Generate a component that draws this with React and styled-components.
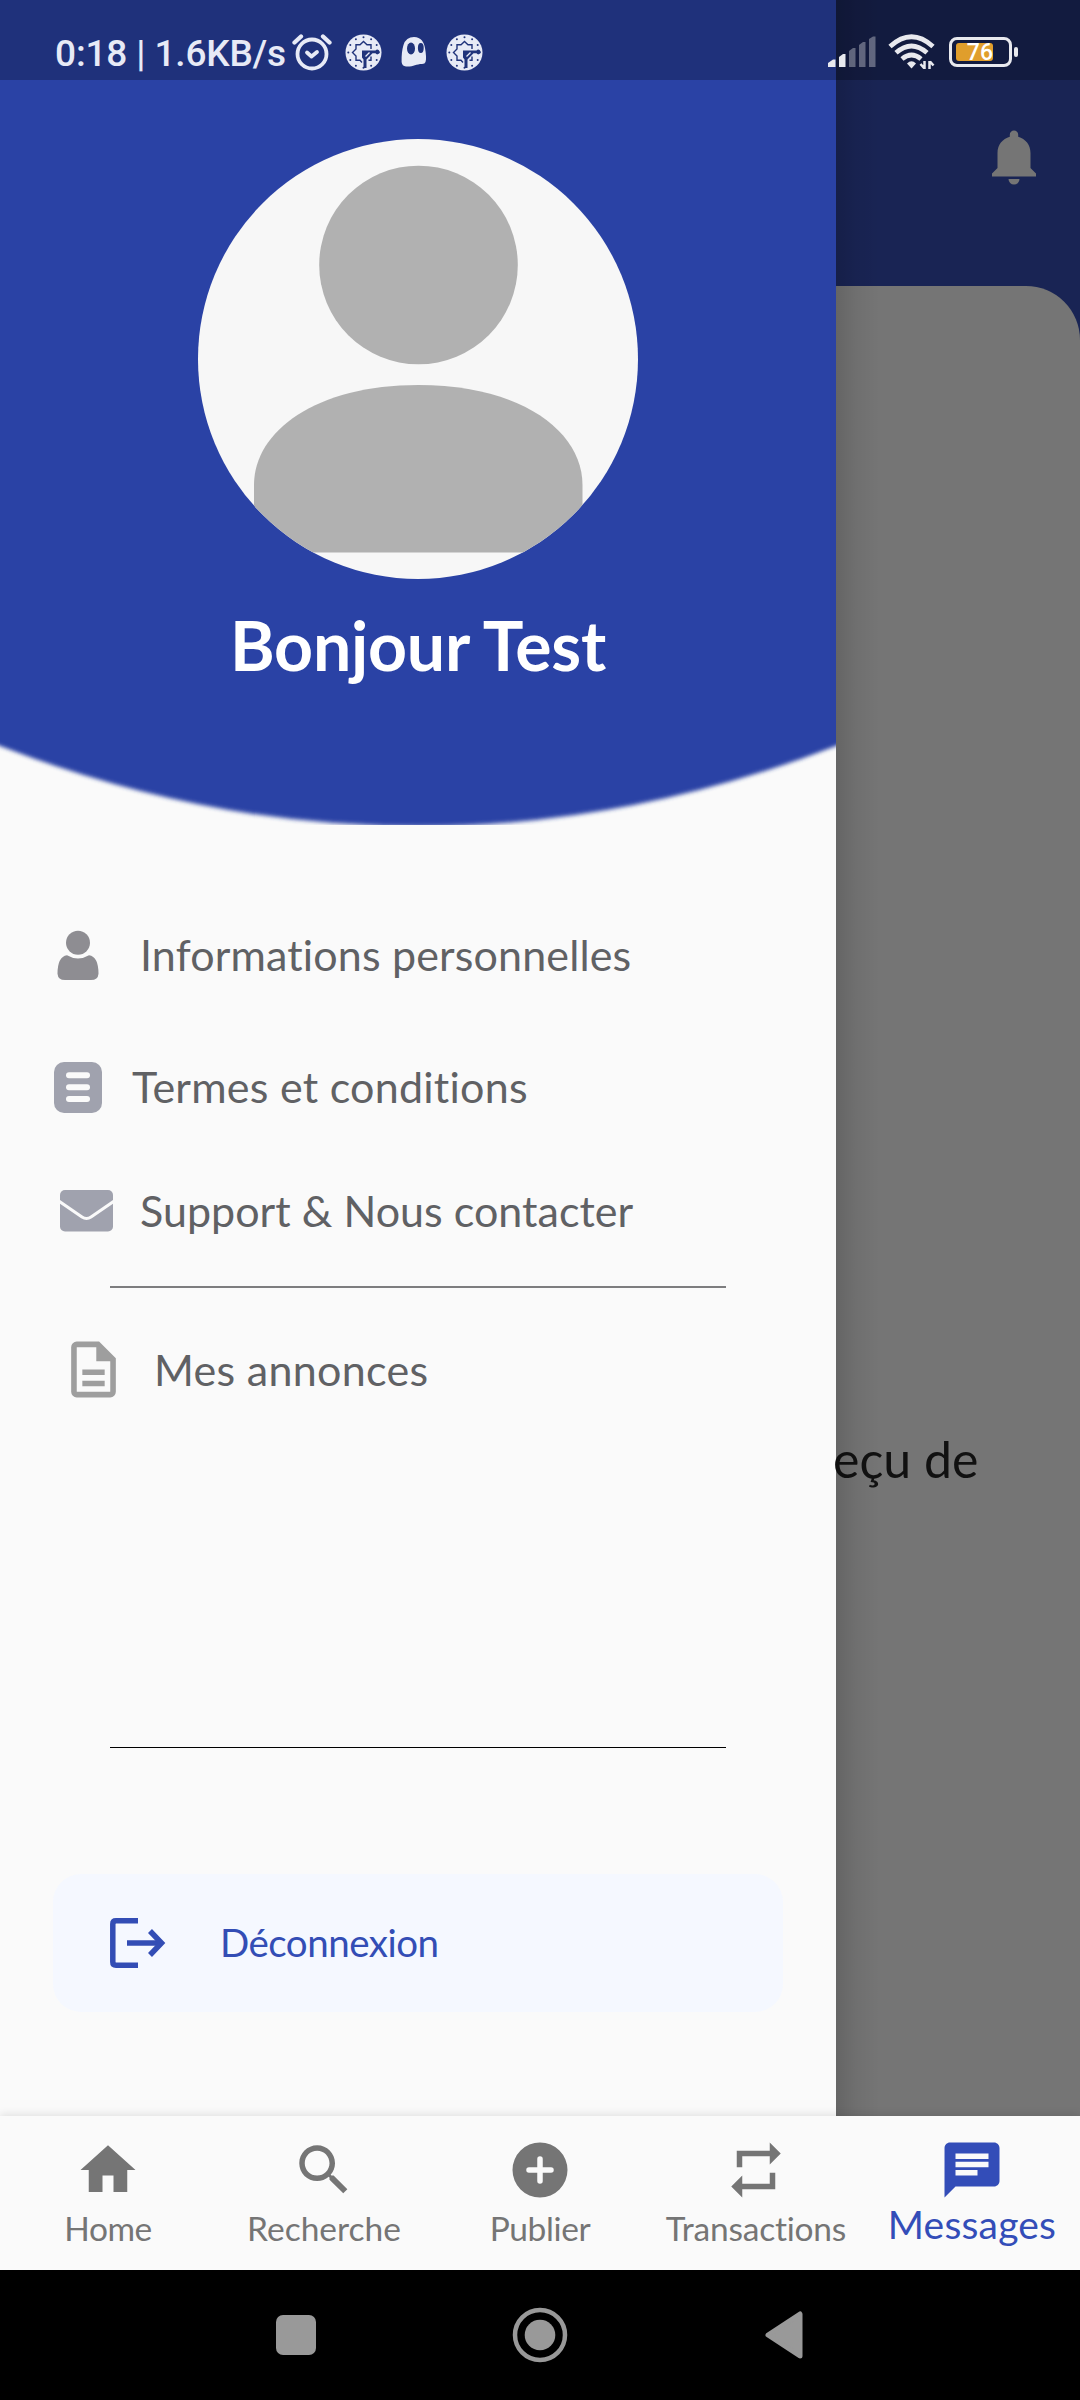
import React from "react";
import styled, { createGlobalStyle } from "styled-components";

const GlobalStyle = createGlobalStyle`
  * { box-sizing: border-box; }
  body { margin: 0; background: #000; }
  svg { display: block; flex: none; }
`;

const Screen = styled.div`
  position: relative;
  width: 1080px;
  height: 2400px;
  display: flex;
  flex-direction: column;
  overflow: hidden;
  font-family: Lato, "Liberation Sans", sans-serif;
  font-variant-ligatures: none;
`;

const Body = styled.div`
  display: flex;
  height: 2116px;
`;

const Drawer = styled.aside`
  width: 836px;
  display: flex;
  flex-direction: column;
  background: #fafafa;
`;

const DrawerHeader = styled.header`
  height: 825px;
  padding-top: 139px;
  display: grid;
  grid-template-columns: 836px;
  grid-template-rows: 440px 82px;
  row-gap: 25px;
  justify-items: center;
  position: relative;
`;

const HeaderShape = styled.svg`
  position: absolute;
  inset: 0;
`;

const Avatar = styled.div`
  position: relative;
  width: 440px;
  height: 440px;
  border-radius: 50%;
  overflow: hidden;
  background: #f7f7f7;
`;

const Greeting = styled.h1`
  position: relative;
  margin: 0;
  color: #fff;
  font-size: 68px;
  line-height: 82px;
  font-weight: 700;
  white-space: nowrap;
  letter-spacing: -0.25px;
`;

const Menu = styled.nav`
  padding-top: 64px;
  display: flex;
  flex-direction: column;
`;

const MenuRow = styled.div`
  height: ${(p) => p.$height}px;
  padding-left: ${(p) => p.$inset}px;
  margin-top: ${(p) => p.$top || 0}px;
  display: flex;
  align-items: center;
  gap: ${(p) => p.$gap}px;
`;

const MenuLabel = styled.span`
  color: #606164;
  font-size: 43px;
  line-height: 52px;
  white-space: nowrap;
  letter-spacing: ${(p) => p.$track || 0}px;
`;

const Divider = styled.div`
  width: 616px;
  height: ${(p) => p.$weight}px;
  margin: ${(p) => p.$top}px 0 0 110px;
  background: ${(p) => p.$color};
`;

const LogoutButton = styled.div`
  width: 730px;
  height: 138px;
  margin: 126px 0 0 53px;
  padding-left: 57px;
  border-radius: 28px;
  background: #f5f8ff;
  display: flex;
  align-items: center;
  gap: 54px;
`;

const LogoutLabel = styled.span`
  color: #334db5;
  font-size: 38.5px;
  line-height: 46px;
  padding-bottom: 3px;
  letter-spacing: -0.5px;
`;

const Backdrop = styled.main`
  width: 244px;
  display: flex;
  flex-direction: column;
  background: #192454;
  position: relative;
  &::after {
    content: "";
    position: absolute;
    inset: 0 auto 0 0;
    width: 44px;
    background: linear-gradient(90deg, rgba(0,0,0,0.14), rgba(0,0,0,0.05) 45%, rgba(0,0,0,0));
  }
`;

const BackdropBar = styled.div`
  height: 286px;
  padding: 130px 43px 0 0;
  display: flex;
  justify-content: flex-end;
`;

const BackdropSheet = styled.div`
  flex: 1;
  padding-top: 1143px;
  background: #757575;
  border-top-right-radius: 54px;
`;

const BackdropText = styled.p`
  margin: 0 0 0 -3px;
  color: #111;
  font-size: 50px;
  line-height: 60px;
  white-space: nowrap;
`;

const TabBar = styled.nav`
  position: relative;
  height: 154px;
  display: grid;
  grid-template-columns: repeat(5, 216px);
  background: #fafafa;
  box-shadow: 0 -2px 8px rgba(0, 0, 0, 0.1);
`;

const Tab = styled.div`
  padding-top: 21px;
  display: flex;
  flex-direction: column;
  align-items: center;
  color: ${(p) => (p.$active ? "#334db8" : "#757575")};
`;

const TabLabel = styled.span`
  margin-top: ${(p) => (p.$active ? -2 : 2)}px;
  font-size: ${(p) => (p.$active ? 39 : 33.5)}px;
  line-height: 46px;
  white-space: nowrap;
  letter-spacing: ${(p) => p.$track || 0}px;
`;

const SystemNav = styled.footer`
  height: 130px;
  display: flex;
  align-items: center;
  justify-content: center;
  background: #000;
`;

const SystemKey = styled.div`
  width: 244px;
  display: flex;
  justify-content: center;
`;

const StatusBar = styled.div`
  position: absolute;
  top: 0;
  left: 0;
  width: 1080px;
  height: 80px;
  padding: 24px 62px 0 55px;
  display: flex;
  justify-content: space-between;
  background: rgba(0, 0, 0, 0.25);
`;

const StatusGroup = styled.div`
  height: 56px;
  display: flex;
  align-items: center;
`;

const StatusIcons = styled.div`
  display: flex;
  align-items: center;
  gap: 19px;
  margin-left: 13px;
`;

const Clock = styled.span`
  width: 237px;
  padding-top: 3px;
  color: #e7eaf6;
  font: 500 37px/56px Roboto, sans-serif;
  white-space: nowrap;
  letter-spacing: -0.15px;
`;

const Battery = styled.div`
  width: 63px;
  height: 30px;
  margin-left: 13px;
  padding: 3px 4px;
  border: 3px solid #e8e9ee;
  border-radius: 8px;
`;

const BatteryLevel = styled.div`
  width: 37px;
  height: 18px;
  border-radius: 3px;
  background: #e09e2c;
  color: #fff;
  text-align: right;
  font: 500 23px/20px Roboto, sans-serif;
`;

const BatteryTip = styled.div`
  width: 4px;
  height: 10px;
  margin-left: 2px;
  border-radius: 2px;
  background: #e8e9ee;
`;

const SignalGroup = styled.div`
  display: flex;
  align-items: center;
  gap: 11px;
`;

function Glyph({ d, size = 66 }) {
  return (
    <svg width={size} height={size} viewBox="0 0 24 24" fill="currentColor">
      <path d={d} />
    </svg>
  );
}

function PersonIcon() {
  return (
    <svg width="42" height="50" viewBox="0 -0.700 42 50" fill="#8e8d92">
      <circle cx="21" cy="12" r="12" />
      <path d="M10 24.500 Q21 31 32 24.500 Q41.500 26 41.500 43 Q41 49.300 34 49.300 H8 Q1 49.300 .5 43 Q.5 26 10 24.500Z" />
    </svg>
  );
}

function ListIcon() {
  return (
    <svg width="48" height="51" viewBox="0 0 48 51">
      <rect width="48" height="51" rx="10" fill="#a0a2ae" />
      <g fill="#fafafa">
        <rect x="12" y="10.300" width="24" height="6" rx="3" />
        <rect x="12" y="22.200" width="24" height="6" rx="3" />
        <rect x="12" y="34" width="24" height="6" rx="3" />
      </g>
    </svg>
  );
}

function MailIcon() {
  return (
    <svg width="53" height="42" viewBox="0 0 53 42">
      <rect width="53" height="41.500" rx="5" fill="#a0a2ae" />
      <path d="M-2 10.500 L22 27 Q26.500 30 31 27 L55 10.500" fill="none" stroke="#fafafa" strokeWidth="3" />
    </svg>
  );
}

function LogoutIcon() {
  return (
    <svg width="56" height="50" viewBox="0 0 56 50" fill="none" stroke="#334db5" strokeWidth="5.500">
      <path d="M28 2.800 H6 Q2.800 2.800 2.800 6 V44 Q2.800 47.200 6 47.200 H28" />
      <path d="M17 25 H51" />
      <path d="M40 13 L51.500 25 L40 37" />
    </svg>
  );
}

function BellIcon() {
  return (
    <svg width="46" height="56" viewBox="0 0 46 56" fill="#757575">
      <path d="M23 .5 a4.200 4.200 0 0 1 4.200 4.200 V6.800 C34.500 8.800 39.500 15 39.500 23 V38 L45 43.500 V46.500 H1 V43.500 L6.500 38 V23 C6.500 15 11.500 8.800 18.800 6.800 V4.700 A4.200 4.200 0 0 1 23 .5Z" />
      <path d="M17.500 49 H28.500 A5.500 5.500 0 0 1 17.500 49Z" />
    </svg>
  );
}

function AlarmIcon() {
  return (
    <svg width="40" height="38" viewBox="0 0 40 38" fill="none" stroke="#e7eaf6" strokeLinecap="round">
      <circle cx="20" cy="21" r="14.500" strokeWidth="3.800" />
      <path d="M15 19.500 L19.500 23.500 L25 19" strokeWidth="3.800" strokeLinejoin="round" />
      <path d="M2.500 9.500 L9 3.500 M31 3.500 L37.500 9.500" strokeWidth="4.300" />
    </svg>
  );
}

function BadgeIcon() {
  const dots = Array.from({ length: 12 }, (_, i) => (i * Math.PI) / 6);
  return (
    <svg width="37" height="37" viewBox="-18.500 -18.500 37 37">
      <circle r="18" fill="#e7eaf6" />
      <g fill="#20337b">
        {dots.map((a) => (
          <circle key={a} cx={15.2 * Math.cos(a)} cy={15.2 * Math.sin(a)} r="1" />
        ))}
        <path d="M-1.500 -2 H12 A2.300 2.300 0 1 1 12 .8 H9 L3 7 V15.500 H0 V7 L-1.500 5Z" />
      </g>
      <path d="M2 4 L6 0" stroke="#e7eaf6" strokeWidth="1.200" />
      <path
        d="M-1.500 10 L-3.500 7.800 H-7.500 V3.500 L-11 0 L-7.500 -3.500 V-7.800 H-3.500 L0 -11 L3.500 -7.800 H7.500 V-3.500 M5 7.800 H7.500 V4"
        fill="none"
        stroke="#20337b"
        strokeWidth="1.400"
      />
    </svg>
  );
}

function GhostIcon() {
  return (
    <svg width="26" height="30" viewBox="0 0 26 30">
      <path d="M13 0 C20 0 23 5 24 11 C25 17 25.500 22 24.500 25 Q24 27 21 27 C15 27 12 30 5 29.500 Q1 29 .6 25 C.5 18 1 13 2.500 8 Q5 0 13 0Z" fill="#e7eaf6" />
      <ellipse cx="10" cy="11.500" rx="4" ry="6" fill="#20337b" />
      <ellipse cx="19.800" cy="11" rx="2.900" ry="5" fill="#20337b" />
    </svg>
  );
}

function SignalIcon() {
  return (
    <svg width="49" height="32" viewBox="0 0 49 32" fill="#e8e9ee">
      <path d="M0 31 V27 L5 23.500 H7.500 V31Z" />
      <path d="M11 31 V21 L15 18 H17.500 V31Z" />
      <g opacity="0.370">
        <path d="M21 31 V15 L25 12 H27.500 V31Z" />
        <path d="M31 31 V9 L35 6 H37.500 V31Z" />
        <path d="M41 31 V3 L45 .5 H47.500 V31Z" />
      </g>
    </svg>
  );
}

function WifiIcon() {
  return (
    <svg width="48" height="36" viewBox="0 0 48 36" fill="none" stroke="#e8e9ee" strokeWidth="4.800">
      <path d="M2 12.500 Q23.500 -7 45 12.500" />
      <path d="M8 18.800 Q23.500 5 39 18.800" />
      <path d="M14 25 Q23.500 17 33 25" />
      <path d="M19 29.500 Q23.500 25 28 29.500 L23.500 34.500Z" fill="#e8e9ee" stroke="none" />
      <path d="M36.500 27 V35 M41.500 35 V27 M32.500 30 L36 34 M42 27.500 L45.500 31.500" strokeWidth="2.500" />
    </svg>
  );
}

const tabs = [
  { label: "Home", track: -0.5, d: "M10 20v-6h4v6h5v-8h3L12 3 2 12h3v8z" },
  {
    label: "Recherche",
    track: 0,
    d: "M15.500 14h-.79l-.28-.27C15.410 12.590 16 11.110 16 9.500 16 5.910 13.090 3 9.500 3S3 5.910 3 9.500 5.910 16 9.500 16c1.610 0 3.090-.59 4.230-1.570l.27.28v.79l5 4.990L20.490 19l-4.990-5zm-6 0C7.010 14 5 11.990 5 9.500S7.010 5 9.500 5 14 7.010 14 9.500 11.990 14 9.500 14z",
  },
  {
    label: "Publier",
    track: -0.4,
    d: "M12 2a10 10 0 1 0 0 20 10 10 0 0 0 0-20zM16 13h-3v3a1 1 0 0 1-2 0v-3H8a1 1 0 0 1 0-2h3V8a1 1 0 0 1 2 0v3h3a1 1 0 0 1 0 2z",
  },
  {
    label: "Transactions",
    track: -0.2,
    d: "M7 7h10v3l4-4-4-4v3H5v6h2V7zm10 10H7v-3l-4 4 4 4v-3h12v-6h-2v4z",
  },
  {
    label: "Messages",
    track: 0.2,
    active: true,
    d: "M20 2H4c-1.100 0-1.990.9-1.990 2L2 22l4-4h14c1.100 0 2-.9 2-2V4c0-1.100-.9-2-2-2zM6 9h12v2H6V9zm8 5H6v-2h8v2zm4-6H6V6h12v2z",
  },
];

export default function App() {
  return (
    <>
      <GlobalStyle />
      <Screen>
        <Body>
          <Drawer>
            <DrawerHeader>
              <HeaderShape width="836" height="825" viewBox="0 0 836 825">
                <defs>
                  <filter id="soft" x="-5%" y="-5%" width="110%" height="110%">
                    <feGaussianBlur stdDeviation="0 2" />
                  </filter>
                </defs>
                <path d="M-10 -20 H846 V742 Q836 746 836 746 Q418 907 0 746 L-10 742Z" fill="#2b43a5" filter="url(#soft)" />
              </HeaderShape>
              <Avatar>
                <svg width="440" height="440" viewBox="0 0 440 440" fill="#b1b1b1">
                  <circle cx="220.500" cy="126" r="99.300" />
                  <path d="M56 346 C56 292 118 246 220.500 246 C323 246 384.500 292 384.500 346 V413.500 H56Z" />
                </svg>
              </Avatar>
              <Greeting>Bonjour Test</Greeting>
            </DrawerHeader>
            <Menu>
              <MenuRow $height={132} $inset={57} $gap={41}>
                <PersonIcon />
                <MenuLabel $track={0.15}>Informations personnelles</MenuLabel>
              </MenuRow>
              <MenuRow $height={132} $inset={54} $gap={30}>
                <ListIcon />
                <MenuLabel $track={0.25}>Termes et conditions</MenuLabel>
              </MenuRow>
              <MenuRow $height={115} $inset={60} $gap={27}>
                <MailIcon />
                <MenuLabel $track={0.03}>Support &amp; Nous contacter</MenuLabel>
              </MenuRow>
              <Divider $top={18} $weight={2} $color="#7d7d7f" />
              <MenuRow $height={139} $top={12} $inset={60} $gap={27}>
                <svg width="67" height="67" viewBox="0 0 24 24" fill="#9e9e9e">
                  <path d="M6 2a2 2 0 0 0-2 2v16a2 2 0 0 0 2 2h12a2 2 0 0 0 2-2V8l-6-6H6zM6 4h7v5h5v11H6V4zM8 12v2h8v-2H8zM8 16v2h8v-2H8z" />
                </svg>
                <MenuLabel $track={0.3}>Mes annonces</MenuLabel>
              </MenuRow>
              <Divider $top={308} $weight={1} $color="#000" />
            </Menu>
            <LogoutButton>
              <LogoutIcon />
              <LogoutLabel>Déconnexion</LogoutLabel>
            </LogoutButton>
          </Drawer>
          <Backdrop>
            <BackdropBar>
              <BellIcon />
            </BackdropBar>
            <BackdropSheet>
              <BackdropText>eçu de</BackdropText>
            </BackdropSheet>
          </Backdrop>
        </Body>
        <TabBar>
          {tabs.map((t) => (
            <Tab key={t.label} $active={t.active}>
              <Glyph d={t.d} />
              <TabLabel $active={t.active} $track={t.track}>{t.label}</TabLabel>
            </Tab>
          ))}
        </TabBar>
        <SystemNav>
          <SystemKey>
            <svg width="40" height="40"><rect width="40" height="40" rx="7" fill="#999" /></svg>
          </SystemKey>
          <SystemKey>
            <svg width="56" height="56" viewBox="-28 -28 56 56">
              <circle r="25" fill="none" stroke="#999" strokeWidth="4.500" />
              <circle r="15.300" fill="#999" />
            </svg>
          </SystemKey>
          <SystemKey>
            <svg width="38" height="48" viewBox="0 0 38 48">
              <path d="M3 24 L35 3 V45Z" fill="#999" stroke="#999" strokeWidth="5" strokeLinejoin="round" />
            </svg>
          </SystemKey>
        </SystemNav>
        <StatusBar>
          <StatusGroup>
            <Clock>0:18 | 1.6KB/s</Clock>
            <AlarmIcon />
            <StatusIcons>
              <BadgeIcon />
              <GhostIcon />
              <BadgeIcon />
            </StatusIcons>
          </StatusGroup>
          <StatusGroup>
            <SignalGroup>
              <SignalIcon />
              <WifiIcon />
            </SignalGroup>
            <Battery><BatteryLevel>76</BatteryLevel></Battery>
            <BatteryTip />
          </StatusGroup>
        </StatusBar>
      </Screen>
    </>
  );
}
